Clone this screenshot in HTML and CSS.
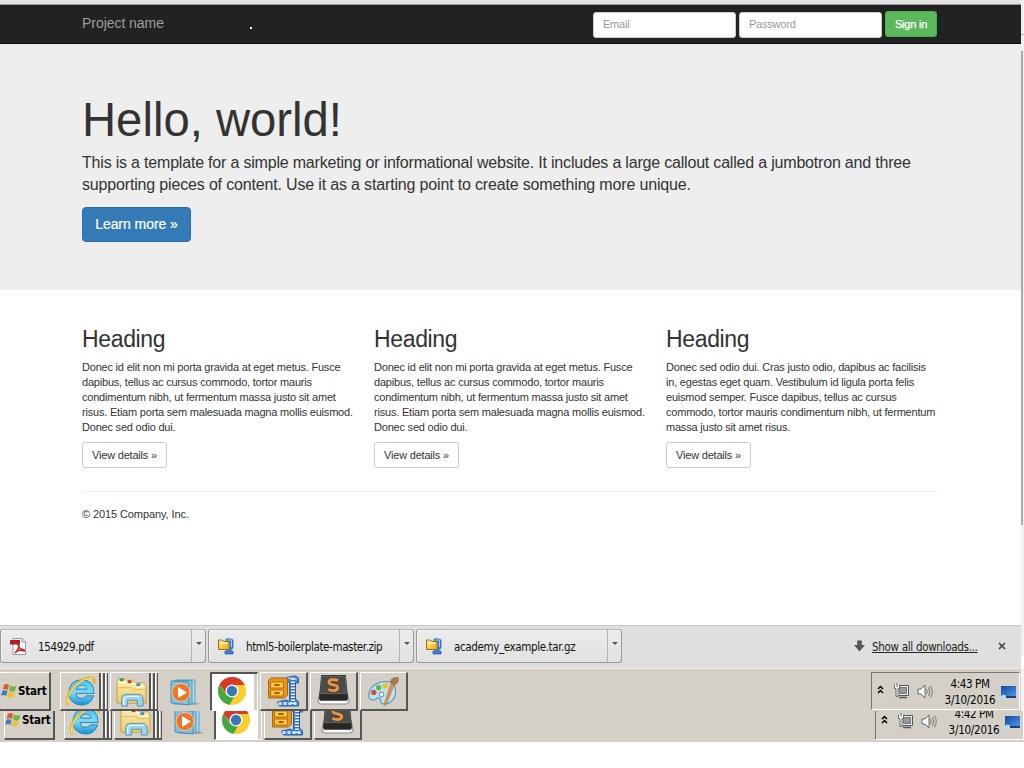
FILE: index.html
```html
<!DOCTYPE html>
<html lang="en">
<head>
<meta charset="utf-8">
<title>Project name</title>
<link rel="stylesheet" href="styles.css">
</head>
<body>
<svg class="defs" aria-hidden="true">
  <defs>
    <linearGradient id="ieBlue" x1="0" y1="0" x2="0" y2="1"><stop offset="0" stop-color="#48c0f0"/><stop offset=".5" stop-color="#7bd9f8"/><stop offset="1" stop-color="#1b8fd2"/></linearGradient>
    <linearGradient id="gold" x1="0" y1="0" x2="1" y2="1"><stop offset="0" stop-color="#fff2a0"/><stop offset="1" stop-color="#e8a80c"/></linearGradient>
    <linearGradient id="paper" x1="0" y1="0" x2="0" y2="1"><stop offset="0" stop-color="#fbefb4"/><stop offset="1" stop-color="#edcc62"/></linearGradient>
    <linearGradient id="screen" x1="0" y1="0" x2="1" y2="1"><stop offset="0" stop-color="#1745a0"/><stop offset="1" stop-color="#4798ec"/></linearGradient>
  </defs>
  <symbol id="flag" viewBox="0 0 17 15">
    <path d="M3 2Q5.500 0 8 2L6.800 7Q4.500 5 1.700 7Z" fill="#e2562b"/>
    <path d="M9 2.500Q12 4.500 15.500 2.800L14 8Q11 9.500 7.800 7.500Z" fill="#74b843"/>
    <path d="M1.400 8Q4 6.500 6.500 8L5.200 13Q2.500 11 0 13Z" fill="#3e7bd0"/>
    <path d="M7.500 8.500Q10.500 10.500 13.700 9L12.300 14Q9 15.500 6.200 13.500Z" fill="#f5c029"/>
  </symbol>
  <symbol id="ie" viewBox="0 0 34 34">
    <path d="M30 19H11.500Q12 24 17 24Q20.500 24 22 21.500H29.500Q26.500 31 17 31Q4 30 4 17.500Q5 5 17 5Q30 5 30 19ZM11.700 14.500H22.500Q22 10.500 17.200 10.500Q12.500 10.500 11.700 14.500Z" fill="url(#ieBlue)" stroke="#1787c5" fill-rule="evenodd"/>
    <path d="M4 31C-1 27 4 15 15 7C24 .5 32 1 30 9" fill="none" stroke="#edb51b" stroke-width="2.700"/>
    <path d="M3.500 30C0 26 5 15 15.500 7.500C22 3 28 1.500 29 4" fill="none" stroke="#fff0a0" stroke-width=".8"/>
  </symbol>
  <symbol id="folder" viewBox="0 0 34 34">
    <path d="M2 29V7L4 4H10L12 6H18L20 8H30L32 11V29Z" fill="url(#paper)" stroke="#c7a03c"/>
    <path d="M4 7H14M13 9H22M22 12H30" stroke="#fffbe0" stroke-width="2"/>
    <path d="M5 5H9" stroke="#25a447" stroke-width="3"/><path d="M13 7H17" stroke="#cf3427" stroke-width="3"/><path d="M22 10H26" stroke="#3495d0" stroke-width="3"/>
    <path d="M2 13H17L20 15H32" stroke="#dcbc5e" fill="none"/>
    <path d="M7 32V24Q7 20 11 20H24Q29 20 29 25V32H23V26H13V32Z" fill="#9ed2ec" stroke="#4a98c4"/><path d="M9 31V24Q10 22 13 22H25" fill="none" stroke="#e1f6ff" stroke-width="1.500"/>
  </symbol>
  <symbol id="media" viewBox="0 0 30 28">
    <path d="M20 24H30L26 26H8Z" fill="#aaa59c"/>
    <path d="M6 1H25V24H6Z" fill="#b2dced" stroke="#5d9fc0"/><path d="M4 1.500H22V25H4Z" fill="#8bc7e2" stroke="#5798bb"/><path d="M1 2L19 3V26L1 24Z" fill="#7fc0de" stroke="#4a91b8"/>
    <circle cx="11" cy="13.500" r="9" fill="#ee7622" stroke="#f8c49c"/><path d="M8 8V19L17 13.500Z" fill="#fff"/>
  </symbol>
  <symbol id="chrome" viewBox="0 0 30 30">
    <circle cx="15" cy="15" r="14" fill="#f9cf2e"/>
    <path d="M2.600 8.500A14 14 0 0 1 27.700 9H15L9.500 18Z" fill="#d93a2d"/>
    <path d="M2.600 8.500L9.200 19L17 21L12.500 28.800A14 14 0 0 1 2.600 8.500Z" fill="#42a846"/>
    <circle cx="15" cy="15" r="6.500" fill="#fff"/><circle cx="15" cy="15" r="5.200" fill="#3778bd"/>
  </symbol>
  <symbol id="zip" viewBox="0 0 32 33">
    <path d="M19 3Q22 1 28 1L31 3V8H28V24L31 27V31H12L10 27L19 25L22 27V7H18Z" fill="#3f86d2" stroke="#285fa6"/>
    <path d="M25.500 2V29" stroke="#eef7ff" stroke-width="4"/><path d="M25.500 2V29" stroke="#336fc0" stroke-width="4" stroke-dasharray="1.500 1.500"/>
    <path d="M19 4Q23 2 29 4" stroke="#a9d5f8" stroke-width="1.500" fill="none"/>
    <path d="M11 28.500H31" stroke="#c7e5ff" stroke-width="3" stroke-dasharray="3 2"/>
    <path d="M1 5L4 3H20V20L17 23H1Z" fill="#e7981a" stroke="#ac6309"/>
    <path d="M3 7H16V13H3ZM3 15H16V21H3Z" fill="#ffc63b" stroke="#b96e12"/><path d="M7 10H12M7 18H12" stroke="#704406" stroke-width="1.500"/>
  </symbol>
  <symbol id="sublime" viewBox="0 0 32 30">
    <path d="M3 17L1 25Q1 29 4 29H28Q31 29 31 25L29 17Z" fill="#fafafa" stroke="#8b8b8b"/>
    <path d="M4 1H28L30 23Q30 26 28 26H4Q2 26 2 23Z" fill="#282828"/>
    <path d="M4.500 2H27.500L28.500 19H3.500Z" fill="#4b4b4b" stroke="#707070" stroke-width=".7"/>
    <path d="M20.500 6Q12 4 11.500 8Q12 10 16 10.500Q21 11.500 20 14Q18 17.500 11 15" fill="none" stroke="#f39237" stroke-width="2.700"/>
  </symbol>
  <symbol id="paint" viewBox="0 0 34 32">
    <path d="M2 20C2 9 15 4 23 6C32 9 31 22 24 27C17 31 13 28 14 24C13 21 10 23 7 25Q2 25 2 20Z" fill="#bce2f2" stroke="#609fbd" stroke-width="1.300"/>
    <circle cx="7" cy="17" r="2.700" fill="#d24c3b"/><circle cx="12" cy="12" r="2.700" fill="#54b947"/><circle cx="19" cy="10" r="3" fill="#eac332"/><circle cx="15" cy="19" r="2.400" fill="#fff" stroke="#4385b6"/>
    <path d="M28 9L20 29Q17 32 18 28L25 7Z" fill="#e8924b" stroke="#ad602c" stroke-width=".6"/><path d="M24 7Q23 1 32 1Q35 6 28 10Z" fill="#a67852"/>
  </symbol>
  <symbol id="arrows" viewBox="0 0 7 9"><path d="M1 4L3.500 1.500L6 4M1 8L3.500 5.500L6 8" fill="none" stroke="#000" stroke-width="1.500"/></symbol>
  <symbol id="network" viewBox="0 0 17 16">
    <path d="M4.500 2.500H15.500V12.500H4.500Z" fill="#eee" stroke="#555"/><path d="M6.500 4.500H13.500V10.500H6.500Z" fill="#999" stroke="#777"/>
    <path d="M6 14.500H14" stroke="#555" stroke-width="1.500"/><path d="M1.500 1.500V5.500H3V13.500H5V5.500H6.500V1.500" fill="#fff" stroke="#666"/><path d="M4 0V4" stroke="#666"/>
  </symbol>
  <symbol id="sound" viewBox="0 0 16 15">
    <path d="M1 5H4L8 1V14L4 10H1Z" fill="#fff" stroke="#666"/><path d="M9.500 5Q11 7.500 9.500 10M11.500 3Q14 7.500 11.500 12M13.500 1.500Q17 7.500 13.500 13.500" fill="none" stroke="#777"/>
  </symbol>
  <symbol id="desktop" viewBox="0 0 15 13"><path d="M0 0H15V10H0Z" fill="url(#screen)"/><path d="M0 10H15V12H0Z" fill="#213e72"/><path d="M0 10Q3 7 5 10V13H0Z" fill="#b5dcf2"/></symbol>
  <symbol id="archive" viewBox="0 0 17 17">
    <path d="M8 1Q12 0 15 2V10L12.500 12V13H15V16H7V13H9.500V11L12 9V4H8Z" fill="#3b83d6" stroke="#2360ad" stroke-width=".8"/><path d="M9 2H13.500V9" fill="none" stroke="#9bd0fa"/>
    <path d="M.5 2H4.500L5.500 3.500H11V11.500H.5Z" fill="url(#gold)" stroke="#a36d06"/><path d="M2 5H9" stroke="#fffbd0"/>
  </symbol>
</svg>

<div class="screen">
  <div class="upper">
    <div class="window">
      <div class="tabstrip"></div>
      <nav class="navbar">
        <span class="brand">Project name</span><span class="dot"></span>
        <form class="signin">
          <input class="field" type="text" placeholder="Email">
          <input class="field" type="password" placeholder="Password">
          <button class="btn-success" type="button">Sign in</button>
        </form>
      </nav>
      <header class="jumbotron">
        <h1 class="title">Hello, world!</h1>
        <p class="lead"><span class="lead-first">This is a template for a simple marketing or informational website. It includes a large callout called a jumbotron and three</span><br><span class="lead-second">supporting pieces of content. Use it as a starting point to create something more unique.</span></p>
        <a class="btn-primary">Learn more »</a>
      </header>
      <main class="content">
        <div class="columns">
          <section class="column">
            <h2 class="heading">Heading</h2>
            <p class="text">Donec id elit non mi porta gravida at eget metus. Fusce<br>dapibus, tellus ac cursus commodo, tortor mauris<br>condimentum nibh, ut fermentum massa justo sit amet<br>risus. Etiam porta sem malesuada magna mollis euismod.<br>Donec sed odio dui.</p>
            <a class="btn-default">View details »</a>
          </section>
          <section class="column">
            <h2 class="heading">Heading</h2>
            <p class="text">Donec id elit non mi porta gravida at eget metus. Fusce<br>dapibus, tellus ac cursus commodo, tortor mauris<br>condimentum nibh, ut fermentum massa justo sit amet<br>risus. Etiam porta sem malesuada magna mollis euismod.<br>Donec sed odio dui.</p>
            <a class="btn-default">View details »</a>
          </section>
          <section class="column">
            <h2 class="heading">Heading</h2>
            <p class="text">Donec sed odio dui. Cras justo odio, dapibus ac facilisis<br>in, egestas eget quam. Vestibulum id ligula porta felis<br>euismod semper. Fusce dapibus, tellus ac cursus<br>commodo, tortor mauris condimentum nibh, ut fermentum<br>massa justo sit amet risus.</p>
            <a class="btn-default">View details »</a>
          </section>
        </div>
        <footer class="footer">© 2015 Company, Inc.</footer>
      </main>
      <div class="downloads">
        <div class="download">
          <svg class="file-icon" viewBox="0 0 17 17"><path d="M3 .5H12L15.500 4V16.500H3Z" fill="#fff" stroke="#999"/><path d="M12 .5V4H15.500" fill="#ddd" stroke="#999"/><path d="M0 2H10V6.500H0Z" fill="#b51c22"/><path d="M5 15Q9 11 9 7Q9 4 8 7Q9 11 14 12Q16 14 11 12Q7 12 5 15Z" fill="none" stroke="#c62128" stroke-width="1.400"/></svg>
          <span class="filename">154929.pdf</span><span class="drop"></span>
        </div>
        <div class="download">
          <svg class="file-icon"><use href="#archive"/></svg>
          <span class="filename">html5-boilerplate-master.zip</span><span class="drop"></span>
        </div>
        <div class="download">
          <svg class="file-icon"><use href="#archive"/></svg>
          <span class="filename">academy_example.tar.gz</span><span class="drop"></span>
        </div>
        <svg class="down" viewBox="0 0 12 12"><path d="M3.500 0H8.500V5H12L6 12L0 5H3.500Z" fill="#555"/></svg>
        <span class="show-all">Show all downloads...</span>
        <svg class="close" viewBox="0 0 8 8"><path d="M1 1L7 7M7 1L1 7" stroke="#444" stroke-width="1.700"/></svg>
      </div>
    </div>
    <div class="scroll"><div class="scroll-top"></div><div class="thumb"></div></div>
  </div>

  <div class="taskbar first">
    <div class="start"><svg class="flag"><use href="#flag"/></svg><b class="start-text">Start</b></div>
    <div class="tasks">
      <div class="task stacked"><svg class="icon"><use href="#ie"/></svg></div>
      <div class="task stacked"><svg class="icon"><use href="#folder"/></svg></div>
      <div class="task flat"><svg class="icon media"><use href="#media"/></svg></div>
      <div class="task active"><svg class="icon chrome"><use href="#chrome"/></svg></div>
      <div class="task"><svg class="icon"><use href="#zip"/></svg></div>
      <div class="task"><svg class="icon sublime"><use href="#sublime"/></svg></div>
      <div class="task"><svg class="icon"><use href="#paint"/></svg></div>
    </div>
    <div class="tray">
      <svg class="arrows"><use href="#arrows"/></svg><svg class="network"><use href="#network"/></svg><svg class="sound"><use href="#sound"/></svg>
      <div class="clock"><span class="time">4:43 PM</span><span class="date">3/10/2016</span></div>
      <svg class="desktop"><use href="#desktop"/></svg>
    </div>
  </div>
  <div class="taskbar second">
    <div class="start"><svg class="flag"><use href="#flag"/></svg><b class="start-text">Start</b></div>
    <div class="tasks">
      <div class="task stacked"><svg class="icon"><use href="#ie"/></svg></div>
      <div class="task stacked"><svg class="icon"><use href="#folder"/></svg></div>
      <div class="task flat"><svg class="icon media"><use href="#media"/></svg></div>
      <div class="task active"><svg class="icon chrome"><use href="#chrome"/></svg></div>
      <div class="task"><svg class="icon"><use href="#zip"/></svg></div>
      <div class="task"><svg class="icon sublime"><use href="#sublime"/></svg></div>
    </div>
    <div class="tray">
      <svg class="arrows"><use href="#arrows"/></svg><svg class="network"><use href="#network"/></svg><svg class="sound"><use href="#sound"/></svg>
      <div class="clock"><span class="time">4:42 PM</span><span class="date">3/10/2016</span></div>
      <svg class="desktop"><use href="#desktop"/></svg>
    </div>
  </div>
</div>
</body>
</html>
```
FILE: styles.css
```css
* { box-sizing: border-box; }
body { margin: 0; background: #fff; color: #333; font-family: "Liberation Sans", Arial, sans-serif; overflow: hidden; }
.defs { position: absolute; width: 0; height: 0; }
svg { display: block; flex: none; }
.screen { width: 1024px; height: 768px; overflow: hidden; background: #fff; white-space: nowrap; }
.upper { display: flex; height: 668px; }
.window { width: 1021px; display: flex; flex-direction: column; }
.tabstrip { height: 5px; background: #e2e2e2; border-bottom: 1px solid #999; flex: none; }
.navbar { height: 39px; background: #222; border-bottom: 1px solid #090909; padding: 0 84px 0 82px; display: flex; align-items: flex-start; flex: none; }
.brand { color: #9d9d9d; font-size: 14px; line-height: 16px; margin-top: 10px; width: 168px; letter-spacing: -.05px; }
.dot { width: 2px; height: 2px; background: #fff; margin-top: 22px; }
.signin { display: flex; gap: 3px; margin: 6px 0 0 auto; }
.field { width: 143px; height: 26px; margin-top: 1px; padding: 0 9px 2px; border: 1px solid #ccc; border-radius: 3px; font: 11px "Liberation Sans", Arial, sans-serif; letter-spacing: -.22px; background: #fff; }
.field::placeholder { color: #999; opacity: 1; }
.btn-success { width: 52px; height: 26px; padding: 0; background: #5cb85c; border: 1px solid #4cae4c; border-radius: 3px; color: #fff; font: 11px "Liberation Sans", Arial, sans-serif; letter-spacing: -.2px; -webkit-text-stroke: .25px #fff; }
.jumbotron { height: 246px; background: #eee; padding: 50px 82px 0; flex: none; }
.title { margin: 0; font-size: 47.25px; font-weight: 400; line-height: 52px; }
.lead { margin: 6px 0 11px; font-size: 16px; line-height: 22px; }
.lead-first { letter-spacing: -.195px; }
.lead-second { letter-spacing: -.165px; }
.btn-primary { display: flex; align-items: center; justify-content: center; width: 109px; height: 35px; padding-bottom: 2px; background: #337ab7; border: 1px solid #2e6da4; border-radius: 4px; color: #fff; font-size: 14px; letter-spacing: -.05px; -webkit-text-stroke: .2px #fff; }
.content { height: 335px; padding: 35px 84px 0 82px; flex: none; }
.columns { display: grid; grid-template-columns: 292px 292px 271px; height: 166px; }
.heading { margin: 0 0 7px; font-size: 23px; font-weight: 400; line-height: 28px; letter-spacing: -.35px; }
.text { margin: 0 0 7px; font-size: 11px; line-height: 15px; letter-spacing: -.205px; }
.btn-default { display: flex; align-items: center; justify-content: center; width: 85px; height: 26px; border: 1px solid #ccc; border-radius: 3px; font-size: 11px; letter-spacing: -.2px; }
.footer { border-top: 1px solid #eee; padding-top: 15px; font-size: 11px; line-height: 15px; letter-spacing: -.1px; }
.downloads { height: 43px; background: #dfdfdf; border-top: 1px solid #c9c9c9; display: flex; align-items: flex-start; padding-top: 3px; color: #222; flex: none; }
.download { width: 206px; height: 34px; margin-right: 2px; display: flex; align-items: center; background: linear-gradient(#ececec, #e1e1e1); border: 1px solid #999; border-top-color: #b4b4b4; border-radius: 3px; padding-left: 9px; box-shadow: inset 1px 1px #f5f5f5; flex: none; }
.file-icon { width: 17px; height: 17px; }
.filename { margin: 2px 0 0 11px; font: 11.5px "DejaVu Sans Condensed", "DejaVu Sans", sans-serif; font-stretch: condensed; letter-spacing: -.37px; color: #111; }
.drop { margin-left: auto; width: 14px; height: 32px; border-left: 1px solid #b3b3b3; padding: 12px 0 0 4px; }
.drop::before { content: ""; display: block; width: 0; border: 3px solid transparent; border-top-color: #555; border-bottom: 0; }
.down { width: 11px; height: 12px; margin: 11px 7px 0 230px; }
.show-all { font: 11.5px "DejaVu Sans Condensed", "DejaVu Sans", sans-serif; font-stretch: condensed; letter-spacing: -.3px; text-decoration: underline; width: 106px; margin-top: 11px; }
.close { width: 8px; height: 8px; margin: 13px 0 0 20px; }
.scroll { width: 3px; background: #f0f0f0; height: 655px; }
.scroll-top { height: 35px; border-bottom: 1px solid #aaa; margin-bottom: 16px; }
.thumb { width: 2px; height: 474px; background: #aaa; }
.taskbar { background: #d4d0c8; display: flex; }
.taskbar.first { width: 1024px; height: 43px; border-top: 1px solid #eee; border-right: 3px solid #f4f3f1; padding-top: 3px; }
.taskbar.second { width: 1024px; height: 31px; overflow: hidden; align-items: flex-end; padding: 0 0 2px 4px; }
.start { width: 51px; height: 39px; display: flex; align-items: center; border: 1px solid #fff; border-left: 0; border-right: 2px solid #555; border-bottom: 2px solid #555; flex: none; padding-left: 1px; }
.second .start { border-left: 1px solid #fff; padding-left: 0; }
.flag { width: 17px; height: 15px; margin-bottom: 2px; }
.start-text { font: bold 11.5px "DejaVu Sans Condensed", "DejaVu Sans", sans-serif; font-stretch: condensed; color: #000; letter-spacing: -.2px; }
.tasks { display: flex; gap: 2px; margin-left: 9px; }
.task { width: 48px; height: 39px; border: 1px solid #fff; border-right: 2px solid #555; border-bottom: 2px solid #555; display: flex; align-items: center; justify-content: center; flex: none; }
.icon { width: 33px; height: 33px; }
.stacked { border-right: 0; background: linear-gradient(90deg, transparent 38px, #555 38px 40px, #fff 40px 41px, #d4d0c8 41px 42px, #555 42px 44px, #fff 44px 45px, #d4d0c8 45px 46px, #555 46px); justify-content: flex-start; padding-left: 4px; }
.flat { border-color: transparent; }
.media { width: 30px; height: 28px; margin: 3px 0 0 2px; }
.active { border: 1px solid #fff; border-left: 2px solid #555; border-top: 2px solid #555; background: #fff; box-shadow: inset -3px 0 #d4d0c8; padding: 0 5px 2px 0; }
.chrome { width: 30px; height: 30px; }
.sublime { margin-bottom: 4px; }
.tray { margin: 0 1px 0 auto; width: 149px; height: 38px; border: 1px solid #777; border-right-color: #fff; border-bottom-color: #fff; display: flex; align-items: center; padding-left: 5px; flex: none; }
.second .tray { margin-right: 0; }
.arrows { width: 7px; height: 9px; margin: 0 9px 4px 0; }
.network { width: 17px; height: 16px; margin-right: 7px; }
.sound { width: 16px; height: 15px; margin-right: 10px; }
.clock { width: 54px; display: flex; flex-direction: column; align-items: center; padding-top: 2px; font: 11.5px/16px "DejaVu Sans Condensed", "DejaVu Sans", sans-serif; font-stretch: condensed; letter-spacing: -.4px; color: #000; flex: none; }
.date { letter-spacing: -.25px; }
.desktop { width: 15px; height: 13px; margin-left: 4px; margin-top: 2px; }
```
